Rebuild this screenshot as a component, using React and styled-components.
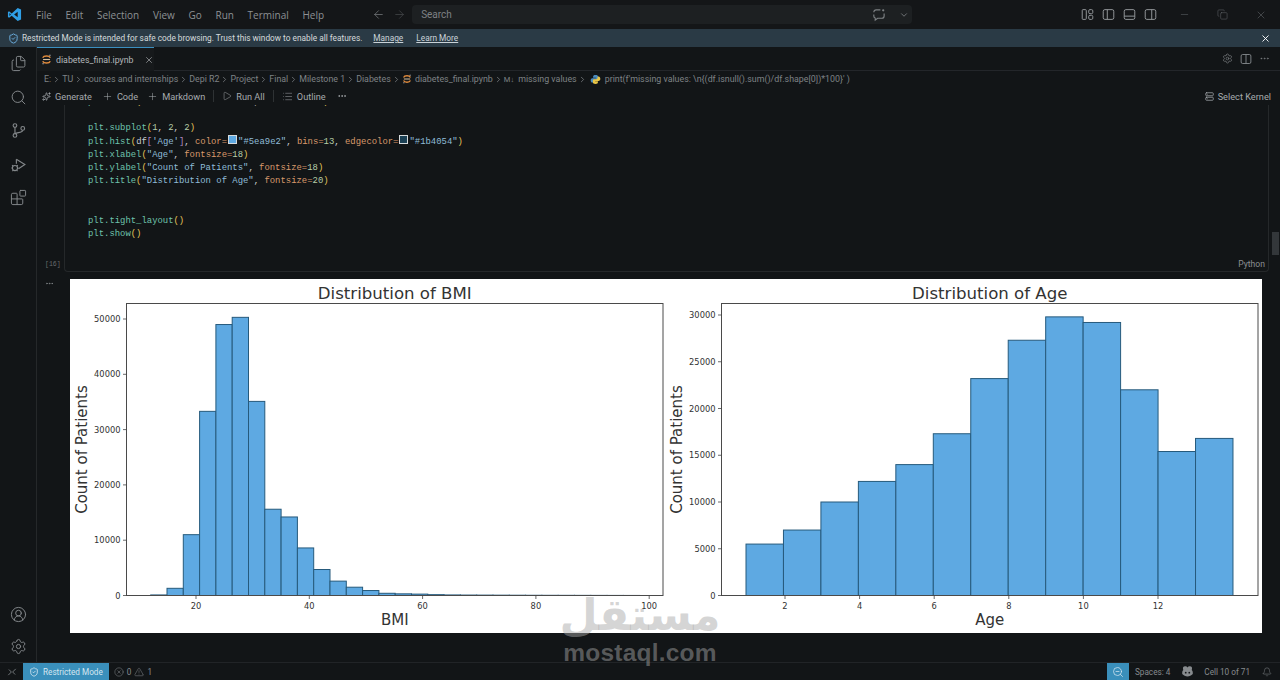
import React from "react";
import styled, { createGlobalStyle } from "styled-components";
import {
  Files,
  Search,
  Blocks,
  CircleUserRound,
  Settings,
  X,
  Ellipsis,
  Plus,
  Play,
  List,
  Server,
  Sparkles,
  ArrowLeft,
  ArrowRight,
  ChevronDown,
  ChevronRight,
  Minus,
  Copy,
  Bell,
  ZoomOut,
  CircleX,
  TriangleAlert,
  ShieldCheck,
} from "lucide-react";

const GlobalStyle = createGlobalStyle`
  html, body {
    margin: 0;
    padding: 0;
    background: #121517;
  }
`;

const Page = styled.div`
  position: relative;
  width: 1280px;
  height: 680px;
  overflow: hidden;
  display: flex;
  flex-direction: column;
  background: #121517;
  color: #b4b8bb;
  font-family: Roboto, "Noto Sans", sans-serif;
  font-size: 9px;
`;

/* title bar */
const TitleBar = styled.header`
  height: 29px;
  flex: none;
  display: flex;
  align-items: center;
  padding-left: 7px;
  background: #141618;
`;

const Menu = styled.nav`
  display: flex;
  gap: 13.7px;
  margin-left: 14px;
  color: #8d9194;
  font-family: "Open Sans", sans-serif;
  font-size: 10px;
`;

const NavArrows = styled.div`
  display: flex;
  gap: 8px;
  margin-left: 48px;
  color: #7c8083;
`;

const SearchBox = styled.div`
  width: 500px;
  height: 19px;
  margin-left: 6px;
  padding: 0 3px 0 9px;
  box-sizing: border-box;
  display: flex;
  align-items: center;
  background: #1d2022;
  border-radius: 4px;
  color: #7d8184;
  font-size: 10px;
`;

const SearchLabel = styled.span`
  flex: 1;
`;

const LayoutIcons = styled.div`
  display: flex;
  gap: 8px;
  margin-left: 169px;
  color: #93979a;
`;

const WindowButtons = styled.div`
  display: flex;
  gap: 27px;
  margin-left: 22px;
  color: #6f7376;
`;

/* restricted mode banner */
const Notice = styled.div`
  height: 18px;
  flex: none;
  display: flex;
  align-items: center;
  padding: 0 9px 0 8px;
  background: #2a3a45;
  color: #d6dadc;
  font-size: 8.3px;
`;

const NoticeText = styled.span`
  margin-left: 3px;
`;

const NoticeLink = styled.a`
  margin-left: ${(props) => props.$gap}px;
  text-decoration: underline;
  color: #c9d2d8;
`;

const NoticeClose = styled.span`
  margin-left: auto;
  display: flex;
  color: #fff;
`;

/* main area */
const Main = styled.div`
  flex: 1;
  min-height: 0;
  display: flex;
`;

const ActivityBar = styled.aside`
  width: 37px;
  flex: none;
  padding-top: 8px;
  box-sizing: border-box;
  display: flex;
  flex-direction: column;
  align-items: center;
  gap: 16.5px;
  border-right: 1px solid #25282a;
  color: #83878a;
`;

const ActivitySpacer = styled.div`
  flex: 1;
`;

const ActivityBottom = styled.div`
  display: flex;
  flex-direction: column;
  gap: 15px;
  padding-bottom: 7px;
`;

const Editor = styled.section`
  flex: 1;
  min-width: 0;
  display: flex;
  flex-direction: column;
`;

const TabRow = styled.div`
  height: 24px;
  flex: none;
  display: flex;
  justify-content: space-between;
  border-bottom: 1px solid #23262a;
  box-sizing: border-box;
`;

const Tab = styled.div`
  width: 117px;
  height: 24px;
  padding-left: 4px;
  box-sizing: border-box;
  display: flex;
  align-items: center;
  gap: 4px;
  border-top: 1px solid #3b8fc0;
  background: #16191b;
  color: #b3b7ba;
  font-size: 8.8px;
  white-space: nowrap;

  svg {
    flex: none;
  }
`;

const TabClose = styled.span`
  display: flex;
  margin-left: 6px;
`;

const TabActions = styled.div`
  display: flex;
  align-items: center;
  gap: 7px;
  padding-right: 10px;
  color: #878b8e;
`;

const Breadcrumbs = styled.div`
  height: 16px;
  flex: none;
  padding-left: 7px;
  display: flex;
  align-items: center;
  gap: 1px;
  color: #7e8285;
  font-size: 8.85px;
  white-space: nowrap;
`;

const MarkdownMark = styled.span`
  font-size: 7.5px;
  margin-right: 3px;
`;

const NotebookBar = styled.div`
  height: 18px;
  flex: none;
  padding: 0 9px 0 5px;
  display: flex;
  align-items: center;
  color: #a6aaad;
  font-size: 9.2px;
  position: relative;
  z-index: 1;
  background: #121517;
`;

const BarButton = styled.span`
  display: flex;
  align-items: center;
  gap: 4px;
  margin-left: ${(props) => props.$gap || 0}px;
`;

const BarDivider = styled.span`
  width: 1px;
  height: 12px;
  margin-left: ${(props) => props.$gap}px;
  background: #2e3234;
`;

const KernelButton = styled(BarButton)`
  margin-left: auto;
`;

const Notebook = styled.div`
  flex: 1;
  min-height: 0;
  overflow: hidden;
`;

const CodeCell = styled.div`
  position: relative;
  height: 176px;
  margin: -9px 11px 0 27px;
  box-sizing: border-box;
  border-left: 1px solid #25282a;
  border-right: 1px solid #25282a;
  border-bottom: 1px solid #25282a;
  border-radius: 0 0 4px 4px;
`;

const CodeBlock = styled.pre`
  margin: 0;
  padding-left: 23px;
  font-family: "Liberation Mono", "DejaVu Sans Mono", monospace;
  font-size: 8.92px;
  line-height: 13.15px;
  color: #c8cccf;
`;

const tokenColors = {
  fn: "#6fc3ac",
  str: "#8fbcd8",
  kw: "#d99a6c",
  num: "#b5cea8",
  br: "#e6c65a",
  pk: "#b48ac4",
};

const Token = styled.span`
  color: ${(props) => tokenColors[props.$kind]};
`;

const Swatch = styled.span`
  display: inline-block;
  width: 7px;
  height: 7px;
  margin: 0 1px;
  vertical-align: -0.5px;
  background: ${(props) => props.$color};
  border: 1px solid #d6dadc;
`;

const RunCount = styled.span`
  position: absolute;
  left: -20px;
  bottom: 3px;
  color: #676b6e;
  font-family: "Liberation Mono", monospace;
  font-size: 6.5px;
`;

const LanguageTag = styled.span`
  position: absolute;
  right: 3px;
  bottom: 2px;
  color: #8b8f92;
  font-size: 8.6px;
`;

const OutputRow = styled.div`
  display: flex;
  margin-top: 7px;
  padding-left: 33px;
  align-items: flex-start;
`;

const OutputMenu = styled.span`
  width: 0;
  color: #83878a;
  display: flex;
`;

const OutputImage = styled.div`
  width: 1192px;
  height: 354px;
  display: flex;
  background: #ffffff;
`;

const ScrollThumb = styled.div`
  position: absolute;
  top: 232px;
  right: 1px;
  width: 7px;
  height: 23px;
  background: #33373a;
`;

/* status bar */
const StatusBar = styled.footer`
  height: 18px;
  flex: none;
  display: flex;
  align-items: center;
  border-top: 1px solid #212427;
  box-sizing: border-box;
  color: #878b8e;
  font-size: 8.2px;
`;

const RemoteButton = styled.span`
  width: 23px;
  display: flex;
  justify-content: center;
  color: #7e8285;
`;

const StatusBadge = styled.span`
  height: 18px;
  padding: 0 ${(props) => props.$pad}px;
  display: flex;
  align-items: center;
  gap: 4px;
  background: #3a8fbb;
  color: #d4e6f0;
`;

const StatusItem = styled.span`
  display: flex;
  align-items: center;
  gap: 3px;
  margin-left: ${(props) => props.$gap}px;
`;

const StatusPush = styled.span`
  margin-left: auto;
`;

/* watermark lying over the picture */
const Watermark = styled.div`
  position: absolute;
  left: 540px;
  top: 589px;
  width: 200px;
  display: flex;
  flex-direction: column;
  align-items: center;
  pointer-events: none;
  color: rgba(167, 167, 167, 0.48);
  font-family: "DejaVu Sans", sans-serif;
  font-weight: 700;
`;

const WatermarkArabic = styled.span`
  font-size: 44px;
  line-height: 51px;
  direction: rtl;
`;

const WatermarkLatin = styled.span`
  font-family: "Liberation Sans", sans-serif;
  font-size: 24.5px;
  line-height: 26px;
  letter-spacing: 0.2px;
`;

const ChartSvg = styled.svg`
  display: block;
  flex: none;
  font-family: "DejaVu Sans", sans-serif;
  fill: #333333;
`;

const JupyterIcon = ({ size = 11 }) => (
  <svg width={size} height={size} viewBox="0 0 16 16" fill="none">
    <path d="M2.5 5.5C4 2 12 2 13.5 5.5" stroke="#e08a3c" strokeWidth="2.2" />
    <path d="M2.5 10.5C4 14 12 14 13.5 10.5" stroke="#e08a3c" strokeWidth="2.2" />
    <path d="M3 8h10" stroke="#d6c0a0" strokeWidth="1.6" />
    <circle cx="13" cy="2" r="1.1" fill="#8f9498" />
    <circle cx="3" cy="14" r="1.1" fill="#8f9498" />
  </svg>
);

const PythonIcon = () => (
  <svg width="11" height="11" viewBox="0 0 16 16" style={{ margin: "0 3px 0 2px" }}>
    <path d="M8 1.500c-2.500 0-3.500 1-3.500 2.500v1.500H8.500V6H3.500C2 6 1 7 1 9s1 3.500 2.500 3.500H5V10.500c0-1.200 1-2 2-2h3c1 0 1.800-.8 1.800-2V4C11.800 2.500 10.500 1.500 8 1.500Z" fill="#4b8bbe" />
    <path d="M8 14.500c2.500 0 3.500-1 3.500-2.500v-1.500H7.500V10h5c1.500 0 2.500-1 2.500-3s-1-3.500-2.500-3.500H11v2c0 1.200-1 2-2 2H6c-1 0-1.800.8-1.800 2V12c0 1.500 1.300 2.500 3.800 2.500Z" fill="#e8c547" />
  </svg>
);

const VsCodeLogo = () => (
  <svg width="15" height="15" viewBox="0 0 16 16">
    <path d="M11.4 1 15 2.7v10.6L11.4 15 5 9.2 2.2 11.4 1 10.7V5.3l1.2-.7L5 6.8 11.4 1Z" fill="#2f9fe6" />
    <path d="M11.4 5 7.6 8l3.8 3V5Z" fill="#141618" />
    <path d="M2.6 6.3v3.4L4.2 8 2.6 6.3Z" fill="#141618" />
  </svg>
);

const SourceControlIcon = () => (
  <svg width="17" height="17" viewBox="0 0 24 24" fill="none" stroke="currentColor" strokeWidth="1.6">
    <circle cx="7" cy="5" r="2.6" />
    <circle cx="7" cy="19" r="2.6" />
    <circle cx="18" cy="9" r="2.6" />
    <path d="M7 7.6v8.8M18 11.6c0 3.4-7 3-11 4.8" />
  </svg>
);

const DebugIcon = () => (
  <svg width="17" height="17" viewBox="0 0 24 24" fill="none" stroke="currentColor" strokeWidth="1.6">
    <path d="M9 4.5 21 12l-9 6" />
    <path d="M9 4.5V11" />
    <circle cx="7" cy="17" r="3.6" />
    <path d="M3 13l1.5 1.5M11 13l-1.5 1.5M2 17h1.4M10.6 17H12M3.4 21.4 4.6 20M10.6 21.4 9.4 20" />
  </svg>
);

const PaneIcon = ({ variant, size = 13 }) => (
  <svg width={size} height={size} viewBox="0 0 16 16" fill="none" stroke="currentColor" strokeWidth="1.2">
    {variant === "grid" ? (
      <>
        <rect x="1.5" y="2" width="5" height="12" rx="1" />
        <rect x="9.5" y="2" width="5" height="5" rx="1.5" />
        <rect x="9.5" y="9" width="5" height="5" rx="1.5" />
      </>
    ) : (
      <>
        <rect x="1.5" y="2" width="13" height="12" rx="2" />
        {variant === "left" && <path d="M6.5 2v12" />}
        {variant === "bottom" && <path d="M1.5 10h13" />}
        {variant === "right" && <path d="M9.5 2v12" />}
        {variant === "center" && <path d="M8 2v12" />}
      </>
    )}
  </svg>
);

const RemoteIcon = () => (
  <svg width="10" height="10" viewBox="0 0 16 16" fill="none" stroke="currentColor" strokeWidth="1.4">
    <path d="M2 13l5-5-4-4" />
    <path d="M14 3L9 8l4 4" />
  </svg>
);

const ChatIcon = () => (
  <svg width="15" height="15" viewBox="0 0 16 16" fill="none" stroke="currentColor" strokeWidth="1.2">
    <path d="M3 5.5C3 4 4 3 5.500 3H10M14 7v2.5c0 1.500-1 2.500-2.500 2.500H7l-2.500 2v-2.200C3.500 11.500 3 10.500 3 9.500V8" />
    <circle cx="13" cy="3.500" r="1.200" fill="currentColor" stroke="none" />
  </svg>
);

const CopilotIcon = () => (
  <svg width="13" height="13" viewBox="0 0 16 16" fill="currentColor">
    <path d="M5 1.500a3 3 0 0 1 3 1.500 3 3 0 0 1 3-1.500c2 0 3 1.500 2.500 3.500l-.3 1c.800.800 1.300 1.800 1.300 3v2c-2 2-4 3-6.500 3s-4.500-1-6.500-3V9c0-1.200.500-2.200 1.300-3l-.3-1C2 3 3 1.500 5 1.500Z" />
    <circle cx="5.800" cy="9.500" r="1.100" fill="#121517" />
    <circle cx="10.200" cy="9.500" r="1.100" fill="#121517" />
  </svg>
);

const bmiBars = [100, 1300, 11000, 33300, 49000, 50300, 35100, 15600, 14200, 8600, 4700, 2600, 1500, 900, 400, 300, 250, 150, 100, 80, 70, 60, 50, 40, 35, 30, 25, 20, 15, 10];
const ageBars = [5500, 7000, 10000, 12200, 14000, 17300, 23200, 27300, 29800, 29200, 22000, 15400, 16800];

const Histogram = ({ title, xLabel, bars, plot, barLeft, barWidth, yScale, xTicks, yTicks }) => {
  const { left, right, top, bottom } = plot;
  return (
    <ChartSvg width="596" height="354" viewBox="0 0 596 354">
      {bars.map((value, i) => (
        <rect
          key={i}
          x={barLeft + i * barWidth}
          y={bottom - value * yScale}
          width={barWidth}
          height={value * yScale}
          fill="#5ea9e2"
          stroke="#265a7c"
          strokeWidth="1"
        />
      ))}
      <rect x={left} y={top} width={right - left} height={bottom - top} fill="none" stroke="#4a4a4a" strokeWidth="1" />
      {xTicks.map((tick) => (
        <g key={tick.label}>
          <line x1={tick.x} x2={tick.x} y1={bottom} y2={bottom + 3.5} stroke="#444" strokeWidth="0.8" />
          <text x={tick.x} y={bottom + 13} fontSize="8.3" textAnchor="middle">{tick.label}</text>
        </g>
      ))}
      {yTicks.map((value) => (
        <g key={value}>
          <line x1={left - 3.5} x2={left} y1={bottom - value * yScale} y2={bottom - value * yScale} stroke="#444" strokeWidth="0.8" />
          <text x={left - 6} y={bottom - value * yScale + 3} fontSize="8.3" textAnchor="end">{value}</text>
        </g>
      ))}
      <text x={(left + right) / 2} y="19.500" fontSize="16.6" textAnchor="middle">{title}</text>
      <text x={(left + right) / 2} y="345.500" fontSize="15" textAnchor="middle">{xLabel}</text>
      <text transform={`translate(${left - 39.5} ${(top + bottom) / 2}) rotate(-90)`} fontSize="15" textAnchor="middle">
        Count of Patients
      </text>
    </ChartSvg>
  );
};

const crumbs = ["E:", "TU", "courses and internships", "Depi R2", "Project", "Final", "Milestone 1", "Diabetes"];

const App = () => {
  return (
    <Page>
      <GlobalStyle />
      <TitleBar>
        <VsCodeLogo />
        <Menu>
          <span>File</span>
          <span>Edit</span>
          <span>Selection</span>
          <span>View</span>
          <span>Go</span>
          <span>Run</span>
          <span>Terminal</span>
          <span>Help</span>
        </Menu>
        <NavArrows>
          <ArrowLeft size={13} strokeWidth={1.3} />
          <ArrowRight size={13} strokeWidth={1.3} opacity={0.5} />
        </NavArrows>
        <SearchBox>
          <SearchLabel>Search</SearchLabel>
          <ChatIcon />
          <ChevronDown size={10} style={{ marginLeft: 13 }} />
        </SearchBox>
        <LayoutIcons>
          <PaneIcon variant="grid" />
          <PaneIcon variant="left" />
          <PaneIcon variant="bottom" />
          <PaneIcon variant="right" />
        </LayoutIcons>
        <WindowButtons>
          <Minus size={11} strokeWidth={1} />
          <Copy size={11} strokeWidth={1} />
          <X size={12} strokeWidth={1} />
        </WindowButtons>
      </TitleBar>

      <Notice>
        <ShieldCheck size={11} color="#6fb4e6" />
        <NoticeText>Restricted Mode is intended for safe code browsing. Trust this window to enable all features.</NoticeText>
        <NoticeLink $gap={11}>Manage</NoticeLink>
        <NoticeLink $gap={13}>Learn More</NoticeLink>
        <NoticeClose>
          <X size={11} strokeWidth={2} />
        </NoticeClose>
      </Notice>

      <Main>
        <ActivityBar>
          <Files size={17} strokeWidth={1.4} />
          <Search size={17} strokeWidth={1.4} />
          <SourceControlIcon />
          <DebugIcon />
          <Blocks size={17} strokeWidth={1.4} />
          <ActivitySpacer />
          <ActivityBottom>
            <CircleUserRound size={17} strokeWidth={1.4} />
            <Settings size={17} strokeWidth={1.4} />
          </ActivityBottom>
        </ActivityBar>

        <Editor>
          <TabRow>
            <Tab>
              <JupyterIcon />
              <span>diabetes_final.ipynb</span>
              <TabClose><X size={10} strokeWidth={1.5} /></TabClose>
            </Tab>
            <TabActions>
              <Settings size={11} strokeWidth={1.3} />
              <PaneIcon variant="center" size={12} />
              <Ellipsis size={11} strokeWidth={1.3} />
            </TabActions>
          </TabRow>

          <Breadcrumbs>
            {crumbs.map((crumb) => (
              <React.Fragment key={crumb}>
                <span>{crumb}</span>
                <ChevronRight size={9} />
              </React.Fragment>
            ))}
            <JupyterIcon size={10} />
            <span>&nbsp;diabetes_final.ipynb</span>
            <ChevronRight size={9} />
            <MarkdownMark>M↓</MarkdownMark>
            <span>missing values</span>
            <ChevronRight size={9} />
            <PythonIcon />
            <span>print(f'missing values: \n{"{"}(df.isnull().sum()/df.shape[0])*100{"}"}' )</span>
          </Breadcrumbs>

          <NotebookBar>
            <BarButton><Sparkles size={9} />Generate</BarButton>
            <BarButton $gap={10}><Plus size={11} strokeWidth={1.2} />Code</BarButton>
            <BarButton $gap={9}><Plus size={11} strokeWidth={1.2} />Markdown</BarButton>
            <BarDivider $gap={8} />
            <BarButton $gap={8}><Play size={10} strokeWidth={1.2} />Run All</BarButton>
            <BarDivider $gap={8} />
            <BarButton $gap={8}><List size={11} strokeWidth={1.1} />Outline</BarButton>
            <BarButton $gap={11}><Ellipsis size={10} /></BarButton>
            <KernelButton><Server size={9} />Select Kernel</KernelButton>
          </NotebookBar>

          <Notebook>
            <CodeCell>
              <CodeBlock>
                <Token $kind="fn">plt.title</Token><Token $kind="br">(</Token><Token $kind="str">"Distribution of BMI"</Token>, <Token $kind="kw">fontsize=</Token><Token $kind="num">20</Token><Token $kind="br">)</Token>{"\n\n"}
                <Token $kind="fn">plt.subplot</Token><Token $kind="br">(</Token><Token $kind="num">1</Token>, <Token $kind="num">2</Token>, <Token $kind="num">2</Token><Token $kind="br">)</Token>{"\n"}
                <Token $kind="fn">plt.hist</Token><Token $kind="br">(</Token>df<Token $kind="pk">[</Token><Token $kind="str">'Age'</Token><Token $kind="pk">]</Token>, <Token $kind="kw">color=</Token><Swatch $color="#5ea9e2" /><Token $kind="str">"#5ea9e2"</Token>, <Token $kind="kw">bins=</Token><Token $kind="num">13</Token>, <Token $kind="kw">edgecolor=</Token><Swatch $color="#1b4054" /><Token $kind="str">"#1b4054"</Token><Token $kind="br">)</Token>{"\n"}
                <Token $kind="fn">plt.xlabel</Token><Token $kind="br">(</Token><Token $kind="str">"Age"</Token>, <Token $kind="kw">fontsize=</Token><Token $kind="num">18</Token><Token $kind="br">)</Token>{"\n"}
                <Token $kind="fn">plt.ylabel</Token><Token $kind="br">(</Token><Token $kind="str">"Count of Patients"</Token>, <Token $kind="kw">fontsize=</Token><Token $kind="num">18</Token><Token $kind="br">)</Token>{"\n"}
                <Token $kind="fn">plt.title</Token><Token $kind="br">(</Token><Token $kind="str">"Distribution of Age"</Token>, <Token $kind="kw">fontsize=</Token><Token $kind="num">20</Token><Token $kind="br">)</Token>{"\n\n\n"}
                <Token $kind="fn">plt.tight_layout</Token><Token $kind="br">()</Token>{"\n"}
                <Token $kind="fn">plt.show</Token><Token $kind="br">()</Token>
              </CodeBlock>
              <RunCount>[16]</RunCount>
              <LanguageTag>Python</LanguageTag>
            </CodeCell>

            <OutputRow>
              <OutputMenu><Ellipsis size={9} style={{ marginLeft: -25 }} /></OutputMenu>
              <OutputImage>
                <Histogram
                  title="Distribution of BMI"
                  xLabel="BMI"
                  bars={bmiBars}
                  plot={{ left: 56.5, right: 593, top: 24.5, bottom: 316.5 }}
                  barLeft={80.7}
                  barWidth={16.3}
                  yScale={0.00553}
                  xTicks={[20, 40, 60, 80, 100].map((v) => ({ label: v, x: 126 + (v - 20) * 5.665 }))}
                  yTicks={[0, 10000, 20000, 30000, 40000, 50000]}
                />
                <Histogram
                  title="Distribution of Age"
                  xLabel="Age"
                  bars={ageBars}
                  plot={{ left: 55.5, right: 592, top: 24.5, bottom: 316.5 }}
                  barLeft={80}
                  barWidth={37.46}
                  yScale={0.00935}
                  xTicks={[2, 4, 6, 8, 10, 12].map((v) => ({ label: v, x: 119 + (v - 2) * 37.3 }))}
                  yTicks={[0, 5000, 10000, 15000, 20000, 25000, 30000]}
                />
              </OutputImage>
            </OutputRow>
          </Notebook>
        </Editor>
      </Main>

      <StatusBar>
        <RemoteButton><RemoteIcon /></RemoteButton>
        <StatusBadge $pad={6}><ShieldCheck size={10} />Restricted Mode</StatusBadge>
        <StatusItem $gap={5}><CircleX size={10} strokeWidth={1.2} />0<TriangleAlert size={10} strokeWidth={1.2} />1</StatusItem>
        <StatusPush />
        <StatusBadge $pad={5}><ZoomOut size={12} strokeWidth={1.5} color="#d4e6f0" /></StatusBadge>
        <StatusItem $gap={6}>Spaces: 4</StatusItem>
        <StatusItem $gap={11}><CopilotIcon /></StatusItem>
        <StatusItem $gap={10}>Cell 10 of 71</StatusItem>
        <StatusItem $gap={12}><Bell size={10} strokeWidth={1.2} /></StatusItem>
        <StatusItem $gap={8} />
      </StatusBar>

      <ScrollThumb />
      <Watermark>
        <WatermarkArabic>مستقل</WatermarkArabic>
        <WatermarkLatin>mostaql.com</WatermarkLatin>
      </Watermark>
    </Page>
  );
};

export default App;
